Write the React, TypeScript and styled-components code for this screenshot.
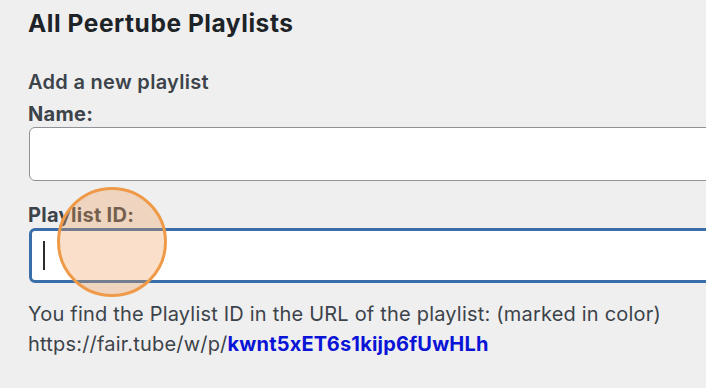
import styled, { createGlobalStyle } from "styled-components";

const GlobalStyle = createGlobalStyle`
  html, body {
    margin: 0;
    padding: 0;
    background: #efefef;
    overflow: hidden;
  }
  body {
    font-family: Inter, "Liberation Sans", sans-serif;
    color: #3c434a;
  }
`;

const Page = styled.div`
  position: relative;
  width: 706px;
  height: 388px;
  padding: 8px 0 0 28px;
  box-sizing: border-box;
  overflow: hidden;
`;

const Title = styled.h1`
  margin: 0;
  font-size: 24.5px;
  line-height: 30px;
  font-weight: 700;
  color: #1d2327;
  letter-spacing: 0.55px;
`;

const SubTitle = styled.h2`
  margin: 32px 0 0;
  font-size: 20px;
  line-height: 24px;
  font-weight: 600;
  color: #3c434a;
  letter-spacing: 0.3px;
`;

const Label = styled.label<{ $gap?: number }>`
  display: block;
  margin-top: ${(p) => p.$gap ?? 8}px;
  font-size: 20px;
  line-height: 24px;
  font-weight: 700;
  color: #3c434a;
  letter-spacing: 0.3px;
`;

const Field = styled.div<{ $focus?: boolean }>`
  display: flex;
  align-items: center;
  margin: 1px 0 0 1px;
  width: 720px;
  height: ${(p) => (p.$focus ? 55 : 54)}px;
  box-sizing: border-box;
  padding-left: ${(p) => (p.$focus ? 11 : 13)}px;
  background: #fff;
  border-radius: 6px;
  border: ${(p) => (p.$focus ? "3px solid #3a6eaa" : "1.5px solid #8f9296")};
`;

const Caret = styled.span`
  width: 1.5px;
  height: 29px;
  background: #2c2c2c;
`;

const Help = styled.p`
  margin: 16px 0 0;
  font-size: 20px;
  line-height: 30px;
  font-weight: 400;
  color: #3c434a;
  letter-spacing: 0.2px;
`;

const IdPart = styled.b`
  color: #0a14d6;
  font-weight: 700;
`;

const Marker = styled.div`
  position: absolute;
  left: 57px;
  top: 187px;
  width: 110px;
  height: 110px;
  box-sizing: border-box;
  border-radius: 50%;
  border: 3.5px solid #ef9a48;
  background: rgba(240, 160, 90, 0.32);
  pointer-events: none;
`;

export default function App() {
  return (
    <>
      <GlobalStyle />
      <Page>
        <Title>All Peertube Playlists</Title>
        <SubTitle>Add a new playlist</SubTitle>
        <Label>Name:</Label>
        <Field />
        <Label $gap={22}>Playlist ID:</Label>
        <Field $focus>
          <Caret />
        </Field>
        <Help>
          You find the Playlist ID in the URL of the playlist: (marked in color)
          <br />
          https://fair.tube/w/p/<IdPart>kwnt5xET6s1kijp6fUwHLh</IdPart>
        </Help>
        <Marker />
      </Page>
    </>
  );
}
